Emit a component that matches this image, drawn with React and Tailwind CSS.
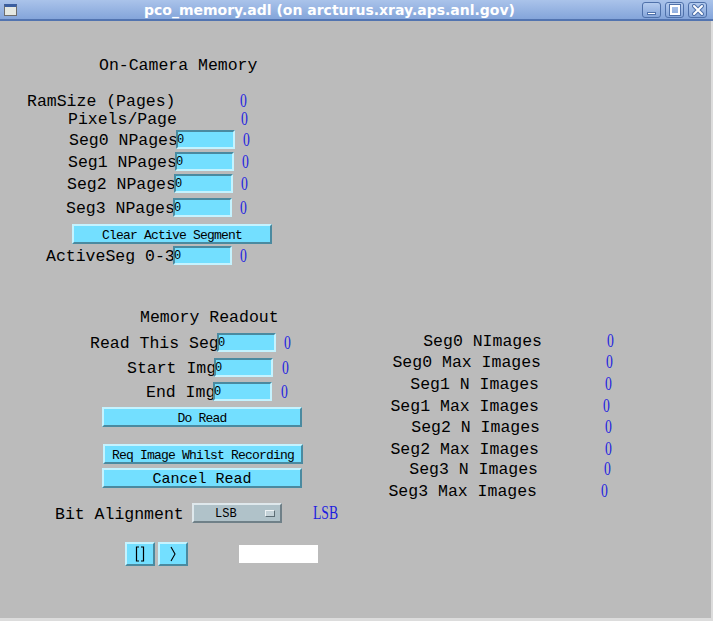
import React from 'react';

const mono = { fontFamily: '"Liberation Mono", "DejaVu Sans Mono", monospace' };
const serif = { fontFamily: '"Liberation Serif", "DejaVu Serif", serif' };

// blue readback value, narrow bitmap-times look
const Val = ({ cls = '', children = '0' }) => (
  <span
    className={`inline-block h-[13px] origin-left scale-x-[0.72] text-[19px] leading-[13px] text-[#1d1de0] ${cls}`}
    style={serif}
  >
    {children}
  </span>
);

const Entry = () => (
  <div className="relative z-10 flex h-[19px] w-[59px] shrink-0 items-center border-2 border-t-[#4a8aa0] border-l-[#4a8aa0] border-b-[#c4f3ff] border-r-[#c4f3ff] bg-[#73dfff]">
    <span className="-ml-[1px] text-[12px] leading-none text-black" style={mono}>0</span>
  </div>
);

const Btn = ({ cls, text = 'text-[13px] tracking-[-0.8px]', children }) => (
  <div
    className={`flex h-[20px] w-[200px] items-center justify-center border-2 border-t-[#c4f3ff] border-l-[#c4f3ff] border-b-[#4a8aa0] border-r-[#4a8aa0] bg-[#73dfff] leading-none text-black ${text} ${cls}`}
    style={mono}
  >
    <span className="translate-y-[1px]">{children}</span>
  </div>
);

const InputRow = ({ row, lw, vm, label }) => (
  <div className={`flex h-[19px] items-center ${row}`}>
    <span className={`shrink-0 translate-y-[2px] whitespace-nowrap text-[16.5px] leading-none text-black ${lw}`} style={mono}>
      {label}
    </span>
    <Entry />
    <Val cls={vm} />
  </div>
);

const ReadRow = ({ row, lw, vm, label }) => (
  <div className={`flex h-[20px] items-center ${row}`}>
    <span className={`shrink-0 translate-y-[2px] whitespace-nowrap text-right text-[16.5px] leading-none text-black ${lw}`} style={mono}>
      {label}
    </span>
    <Val cls={vm} />
  </div>
);

const WinBtn = ({ children }) => (
  <div className="flex h-[16px] w-[19px] items-center justify-center rounded-[3px] border border-[#4f71aa] bg-gradient-to-b from-[#b4cbee] to-[#86a6da]">
    {children}
  </div>
);

export default function App() {
  return (
    <div className="flex h-[621px] w-[713px] flex-col overflow-hidden bg-[#bbbbbb]">
      {/* title bar */}
      <div className="flex h-[21px] shrink-0 items-center border-b-2 border-[#5274b0] bg-gradient-to-b from-[#aac3ea] to-[#84a5da]">
        <div className="ml-[4px] h-[12px] w-[13px] border border-[#6d6d6d] border-t-[3px] border-t-[#3a5ea0] bg-[#e4e8e2]" />
        <div
          className="flex-1 text-center text-[14px] font-bold leading-none text-white"
          style={{ fontFamily: '"DejaVu Sans", sans-serif' }}
        >
          pco_memory.adl (on arcturus.xray.aps.anl.gov)
        </div>
        <div className="mr-[6px] flex gap-[4px]">
          <WinBtn>
            <div className="mt-[8px] h-[3px] w-[9px] border border-[#4f71aa] bg-white" />
          </WinBtn>
          <WinBtn>
            <div className="h-[10px] w-[10px] border-2 border-white outline outline-1 outline-[#4f71aa]" />
          </WinBtn>
          <WinBtn>
            <svg width="12" height="12" viewBox="0 0 12 12">
              <path d="M2 2 L10 10 M10 2 L2 10" stroke="#4f71aa" strokeWidth="4" strokeLinecap="round" />
              <path d="M2 2 L10 10 M10 2 L2 10" stroke="#ffffff" strokeWidth="2" strokeLinecap="round" />
            </svg>
          </WinBtn>
        </div>
      </div>

      {/* display area */}
      <div className="flex flex-1 flex-col border-b-[3px] border-r-2 border-[#dcdcdc]">
        <div className="mt-[33px] flex h-[20px] items-center pl-[99px] text-[16.5px] leading-none text-black" style={mono}>
          <span className="translate-y-[2px]">On-Camera Memory</span>
        </div>

        <div className="mt-[17px] flex h-[18px] items-center pl-[27px]">
          <span className="w-[213px] shrink-0 translate-y-[2px] whitespace-nowrap text-[16.5px] leading-none text-black" style={mono}>RamSize (Pages)</span>
          <Val />
        </div>
        <div className="flex h-[18px] items-center pl-[68px]">
          <span className="w-[173px] shrink-0 translate-y-[2px] whitespace-nowrap text-[16.5px] leading-none text-black" style={mono}>Pixels/Page</span>
          <Val />
        </div>

        <InputRow row="mt-[3px] pl-[69px]" lw="w-[107px]" vm="ml-[8px]" label="Seg0 NPages" />
        <InputRow row="mt-[3px] pl-[68px]" lw="w-[107px]" vm="ml-[8px]" label="Seg1 NPages" />
        <InputRow row="mt-[3px] pl-[67px]" lw="w-[107px]" vm="ml-[8px]" label="Seg2 NPages" />
        <InputRow row="mt-[5px] pl-[66px]" lw="w-[107px]" vm="ml-[8px]" label="Seg3 NPages" />

        <div className="mt-[7px] pl-[72px]">
          <Btn>Clear Active Segment</Btn>
        </div>

        <InputRow row="mt-[2px] pl-[46px]" lw="w-[127px]" vm="ml-[8px]" label="ActiveSeg 0-3" />

        {/* readout section */}
        <div className="mt-[41px] flex items-start">
          <div className="flex w-[380px] shrink-0 flex-col">
            <div className="flex h-[20px] items-center pl-[140px] text-[16.5px] leading-none text-black" style={mono}>
              <span className="translate-y-[2px]">Memory Readout</span>
            </div>
            <InputRow row="mt-[7px] pl-[90px]" lw="w-[127px]" vm="ml-[8px]" label="Read This Seg" />
            <InputRow row="mt-[6px] pl-[127px]" lw="w-[87px]" vm="ml-[9px]" label="Start Img" />
            <InputRow row="mt-[5px] pl-[146px]" lw="w-[67px]" vm="ml-[9px]" label="End Img" />
            <div className="mt-[6px] pl-[102px]">
              <Btn>Do Read</Btn>
            </div>
            <div className="mt-[17px] pl-[103px]">
              <Btn>Req Image Whilst Recording</Btn>
            </div>
            <div className="mt-[4px] pl-[102px]">
              <Btn text="text-[15px]">Cancel Read</Btn>
            </div>
          </div>

          <div className="mt-[24px] flex flex-col">
            <ReadRow row="" lw="w-[162px]" vm="ml-[65px]" label="Seg0 NImages" />
            <ReadRow row="mt-[1px]" lw="w-[161px]" vm="ml-[65px]" label="Seg0 Max Images" />
            <ReadRow row="mt-[2px]" lw="w-[159px]" vm="ml-[66px]" label="Seg1 N Images" />
            <ReadRow row="mt-[2px]" lw="w-[159px]" vm="ml-[64px]" label="Seg1 Max Images" />
            <ReadRow row="mt-[1px]" lw="w-[160px]" vm="ml-[65px]" label="Seg2 N Images" />
            <ReadRow row="mt-[2px]" lw="w-[159px]" vm="ml-[66px]" label="Seg2 Max Images" />
            <ReadRow row="" lw="w-[158px]" vm="ml-[66px]" label="Seg3 N Images" />
            <ReadRow row="mt-[2px]" lw="w-[157px]" vm="ml-[64px]" label="Seg3 Max Images" />
          </div>
        </div>

        {/* bit alignment */}
        <div className="mt-[3px] flex h-[20px] items-center pl-[55px]">
          <span className="w-[137px] shrink-0 translate-y-[2px] whitespace-nowrap text-[16.5px] leading-none text-black" style={mono}>Bit Alignment</span>
          <div className="relative flex h-[20px] w-[90px] items-center border-2 border-t-[#dfe8ec] border-l-[#dfe8ec] border-b-[#6f8088] border-r-[#6f8088] bg-[#b0c2c9]">
            <span className="ml-[21px] translate-y-[1px] text-[12px] leading-none text-black" style={mono}>LSB</span>
            <div className="ml-auto mr-[5px] h-[7px] w-[10px] border border-t-[#eef3f5] border-l-[#eef3f5] border-b-[#5c6c74] border-r-[#5c6c74] bg-[#c4d2d8]" />
          </div>
          <span
            className="ml-[31px] inline-block h-[14px] origin-left scale-x-[0.72] text-[19px] leading-[14px] text-[#1d1de0]"
            style={serif}
          >
            LSB
          </span>
        </div>

        {/* related display / shell buttons */}
        <div className="mt-[19px] flex h-[24px] items-center pl-[125px]">
          <div className="flex h-[24px] w-[30px] items-center justify-center border-2 border-t-[#c4f3ff] border-l-[#c4f3ff] border-b-[#4a8aa0] border-r-[#4a8aa0] bg-[#73dfff]">
            <svg width="10" height="16" viewBox="0 0 10 16">
              <path d="M4 1 H1.5 V15 H4 M6 1 H8.5 V15 H6" fill="none" stroke="#000" strokeWidth="1.2" />
            </svg>
          </div>
          <div className="ml-[3px] flex h-[24px] w-[30px] items-center justify-center border-2 border-t-[#c4f3ff] border-l-[#c4f3ff] border-b-[#4a8aa0] border-r-[#4a8aa0] bg-[#73dfff]">
            <svg width="8" height="16" viewBox="0 0 8 16">
              <path d="M2 1 L6 8 L2 15" fill="none" stroke="#000" strokeWidth="1.1" />
            </svg>
          </div>
          <div className="ml-[51px] h-[18px] w-[79px] bg-white" />
        </div>
      </div>
    </div>
  );
}
